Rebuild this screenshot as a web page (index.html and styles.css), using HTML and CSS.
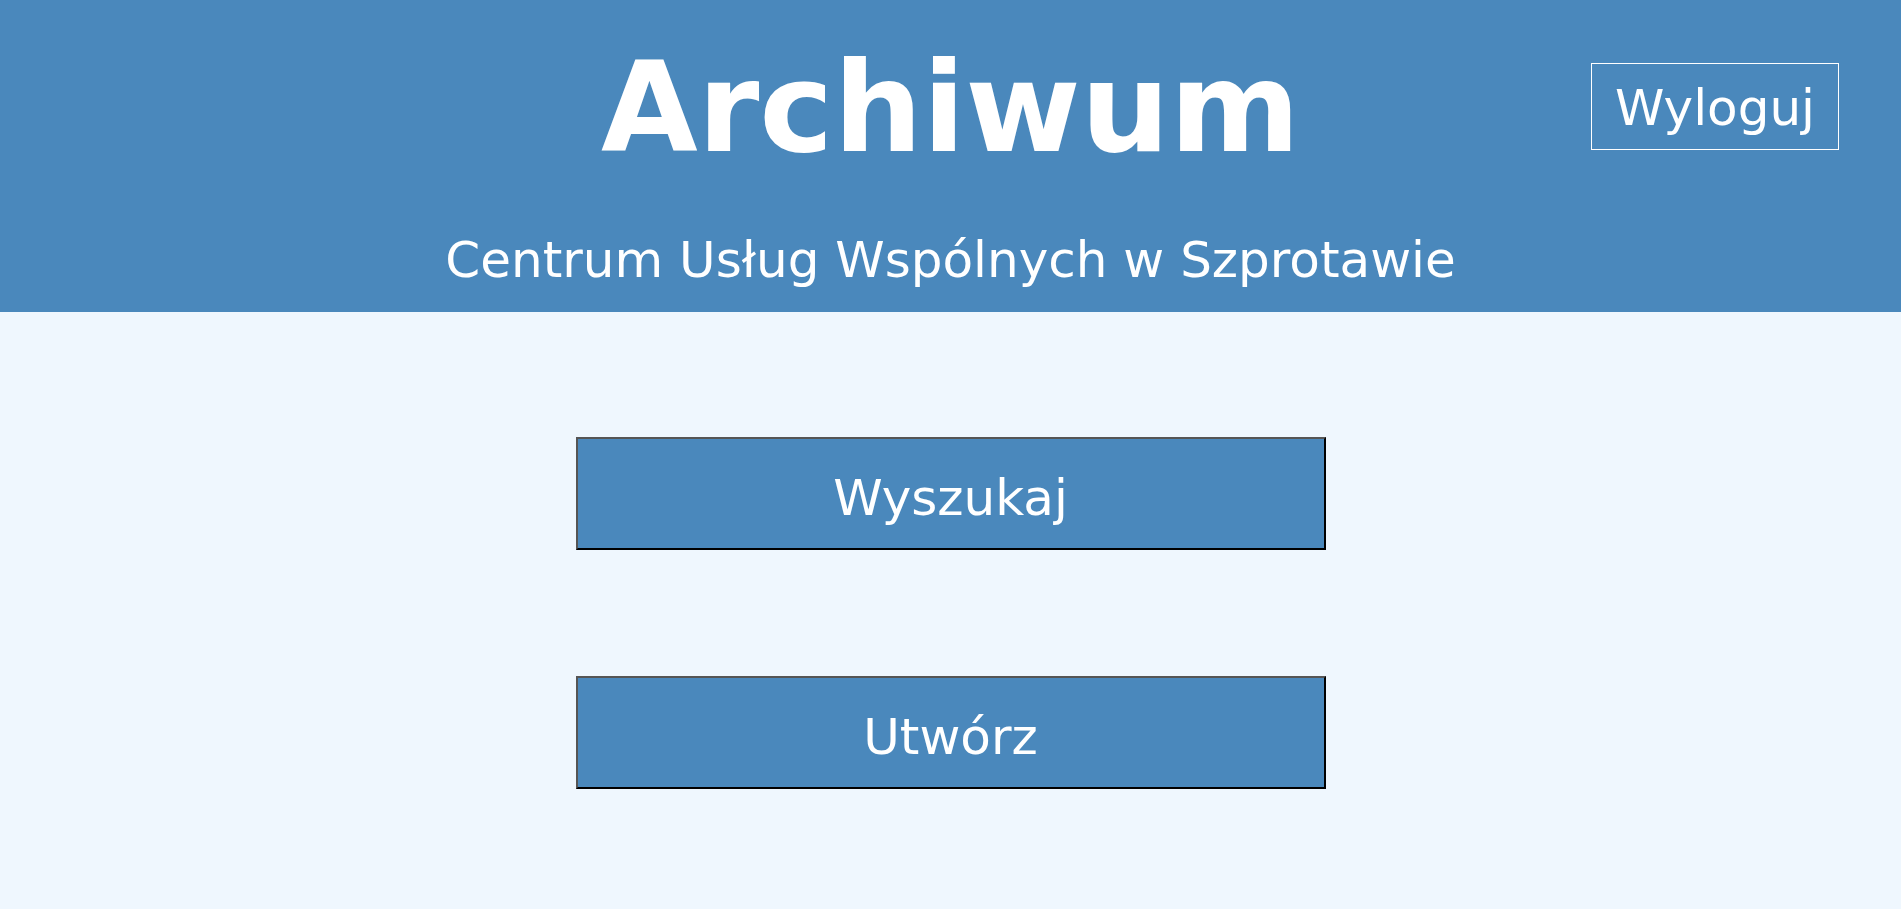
FILE: index.html
```html
<!DOCTYPE html>
<html lang="pl">
<head>
<meta charset="utf-8">
<title>Archiwum</title>
<link rel="stylesheet" href="styles.css">
</head>
<body>
<header class="header">
  <div class="header-spacer"></div>
  <h1 class="title">Archiwum</h1>
  <div class="header-actions">
    <button class="logout" type="button">Wyloguj</button>
  </div>
  <p class="subtitle">Centrum Usług Wspólnych w Szprotawie</p>
</header>
<main class="menu">
  <button class="menu-btn" type="button">Wyszukaj</button>
  <button class="menu-btn" type="button">Utwórz</button>
</main>
</body>
</html>
```

FILE: styles.css
```css
html, body {
  margin: 0;
  padding: 0;
  min-height: 100%;
}

body {
  background: #eff7fe;
  font-family: "DejaVu Sans", Verdana, sans-serif;
  color: #fff;
  min-height: 909px;
}

.header {
  background: #4a88bc;
  display: grid;
  grid-template-columns: 1fr auto 1fr;
  padding: 33px 0 22px;
  height: 312px;
  box-sizing: border-box;
}

.title {
  grid-column: 2;
  margin: 0;
  font-size: 125px;
  line-height: 149px;
  font-weight: bold;
  color: #fff;
}

.header-actions {
  grid-column: 3;
  display: flex;
  justify-content: flex-end;
  align-items: flex-start;
  padding: 30px 62px 0 0;
}

.logout {
  background: transparent;
  border: 1px solid #fff;
  color: #fff;
  font-family: "DejaVu Sans", Verdana, sans-serif;
  font-size: 50px;
  line-height: 85px;
  height: 87px;
  padding: 2px 23px 0;
  margin: 0;
  cursor: pointer;
}

.subtitle {
  grid-column: 1 / 4;
  margin: 48px 0 0;
  text-align: center;
  font-size: 50px;
  line-height: 60px;
  color: #fff;
}

.menu {
  display: flex;
  flex-direction: column;
  align-items: center;
  gap: 126px;
  padding-top: 125px;
}

.menu-btn {
  width: 750px;
  height: 113px;
  box-sizing: border-box;
  background: #4a88bc;
  color: #fff;
  border-style: solid;
  border-width: 2px;
  border-color: #555 #000 #000 #555;
  font-family: "DejaVu Sans", Verdana, sans-serif;
  font-size: 50px;
  padding: 8px 0 0;
  margin: 0;
  cursor: pointer;
}
```
